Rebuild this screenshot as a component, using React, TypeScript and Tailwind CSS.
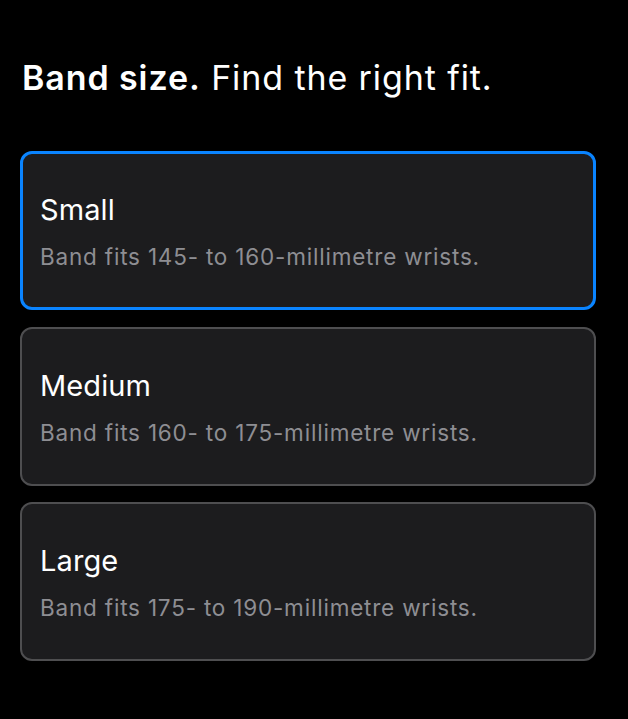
const sizes = [
  { name: 'Small', range: '145- to 160-millimetre', selected: true },
  { name: 'Medium', range: '160- to 175-millimetre', selected: false },
  { name: 'Large', range: '175- to 190-millimetre', selected: false },
];

export default function App() {
  return (
    <div className="min-h-[719px] w-full bg-black pl-5 pr-8 pt-[54px] text-white font-['Inter',sans-serif]">
      <h2 className="pl-[2px] text-[34px] leading-[48px] tracking-[0.9px]">
        <span className="font-semibold">Band size.</span> Find the right fit.
      </h2>

      <div className="mt-[49px] flex flex-col gap-[16.5px]">
        {sizes.map((s) => (
          <button
            key={s.name}
            className={
              'flex h-[159px] w-full flex-col justify-center gap-[15px] rounded-[12px] bg-[#1c1c1e] pt-[2px] text-left ' +
              (s.selected
                ? 'border-[3px] border-[#0a84ff] px-[17px]'
                : 'border-2 border-[#4e4e50] px-[18px]')
            }
          >
            <span className="text-[29px] leading-[36px] tracking-[0.1px]">{s.name}</span>
            <span className="text-[22.5px] leading-[28px] tracking-[0.8px] text-[#8e8e93]">
              Band fits {s.range} wrists.
            </span>
          </button>
        ))}
      </div>
    </div>
  );
}
